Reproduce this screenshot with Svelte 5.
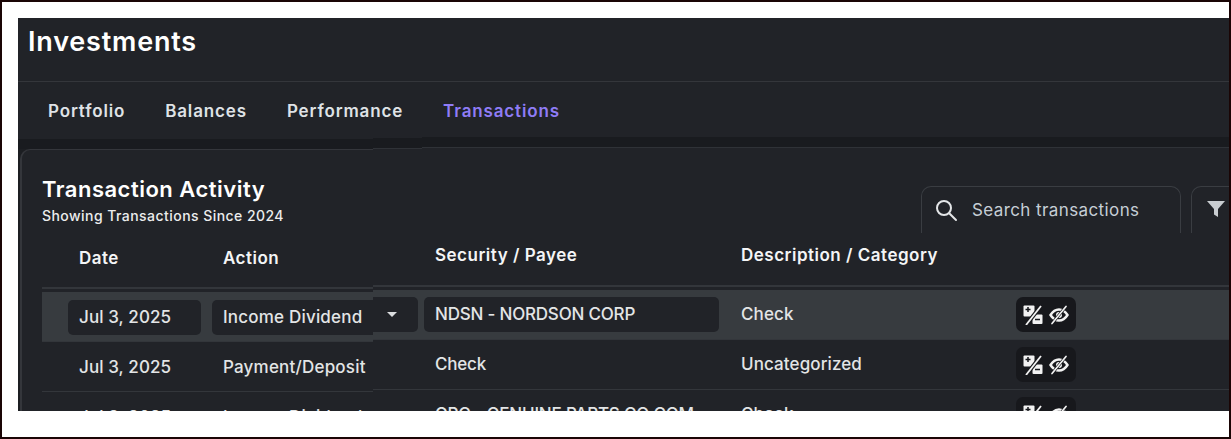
<script>
    const tabs = ["Portfolio", "Balances", "Performance", "Transactions"];
    const rows = [
        { date: "Jul 3, 2025", action: "Income Dividend", payee: "NDSN - NORDSON CORP", category: "Check", editing: true },
        { date: "Jul 3, 2025", action: "Payment/Deposit", payee: "Check", category: "Uncategorized", editing: false },
        { date: "Jul 3, 2025", action: "Income Dividend", payee: "GPC - GENUINE PARTS CO COM", category: "Check", editing: false },
    ];
</script>

<div class="frame">
    <div class="panel">
        <header class="top">
            <h1>Investments</h1>
        </header>
        <nav class="tabs">
            {#each tabs as tab}
                <a href="#{tab}" class:active={tab === "Transactions"}>{tab}</a>
            {/each}
        </nav>

        <div class="seam">
            <span class="seg one"></span>
            <span class="seg two"></span>
            <span class="seg three"></span>
        </div>

        <section class="card">
            <div class="cap">
                <div class="corner"></div>
                <div class="rest"></div>
            </div>
            <div class="card-body">
                <div class="card-head">
                    <div class="titles">
                        <h2>Transaction Activity</h2>
                        <p>Showing Transactions Since 2024</p>
                    </div>
                    <div class="search-wrap">
                        <div class="search">
                            <svg width="24" height="24" viewBox="0 0 24 24" fill="none" stroke="#e4e6e8" stroke-width="2" stroke-linecap="round">
                                <circle cx="10" cy="10" r="7" />
                                <path d="M15.2 15.2 22 22" />
                            </svg>
                            <span>Search transactions</span>
                        </div>
                    </div>
                    <div class="search-wrap filter-wrap">
                        <div class="filter">
                            <svg width="18" height="18" viewBox="0 0 18 18" fill="#c9cdd1">
                                <path d="M0 1h18l-7 8v8l-4-2.500V9z" />
                            </svg>
                        </div>
                    </div>
                </div>

                <div class="row head">
                    <div class="left">
                        <div class="cell">Date</div>
                        <div class="cell">Action</div>
                    </div>
                    <div class="right">
                        <div class="caret-cell"></div>
                        <div class="cell payee">Security / Payee</div>
                        <div class="cell category">Description / Category</div>
                    </div>
                </div>

                {#each rows as row}
                    <div class="row" class:editing={row.editing}>
                        <div class="left">
                            <div class="cell box">{row.date}</div>
                            <div class="cell box action">{row.action}</div>
                        </div>
                        <div class="right">
                            <div class="caret-cell box">
                                {#if row.editing}<span class="caret"></span>{/if}
                            </div>
                            <div class="cell box payee">{row.payee}</div>
                            <div class="cell category">{row.category}</div>
                            <div class="icons">
                                <svg width="20" height="20" viewBox="0 0 20 20">
                                    <rect x="0.500" y="0.500" width="11" height="11" rx="1" fill="#f2f2f2" />
                                    <rect x="9.500" y="9.500" width="10" height="9.500" rx="1" fill="#f2f2f2" />
                                    <path d="M2.500 4.500h5M5 2v5M12 14.500h5" stroke="#17181c" stroke-width="1.500" />
                                    <path d="M18 1 3 20" stroke="#17181c" stroke-width="4" />
                                    <path d="M18 1 3 20" stroke="#f2f2f2" stroke-width="1.800" />
                                </svg>
                                <svg width="20" height="20" viewBox="0 0 20 20" fill="none" stroke="#f2f2f2" stroke-width="2.400" stroke-linecap="round">
                                    <path d="M1.500 10C4 6 7 4.500 10 4.500s6 1.500 8.500 5.500c-2.500 4-5.500 5.500-8.500 5.500s-6-1.500-8.500-5.500z" />
                                    <circle cx="10" cy="10" r="3" fill="#f2f2f2" stroke="none" />
                                    <path d="M17 1.500 3 18.500" stroke="#17181c" stroke-width="2.800" />
                                    <path d="M17 1.500 3 18.500" stroke-width="1.700" />
                                </svg>
                            </div>
                        </div>
                    </div>
                {/each}
            </div>
        </section>
    </div>
</div>

<style>
    :global(body) {
        margin: 0;
        background: #fff;
    }
    .frame {
        box-sizing: border-box;
        width: 1231px;
        height: 439px;
        padding: 16px 0 24px 16px;
        border: 2px solid #1a0505;
        background: #fff;
        font-family: Inter, "Noto Sans", sans-serif;
        overflow: hidden;
    }
    .panel {
        height: 393px;
        overflow: hidden;
        background: #1c1e22;
        color: #e8e9ea;
    }
    .top {
        height: 64px;
        background: #212328;
        border-bottom: 1px solid #34363b;
        box-sizing: border-box;
    }
    h1 {
        margin: 0;
        padding: 8px 0 0 10px;
        font-size: 27px;
        line-height: 32px;
        font-weight: 600;
        letter-spacing: 0.8px;
        color: #fff;
    }
    .tabs {
        display: flex;
        gap: 40px;
        height: 55px;
        padding: 3px 0 0 30px;
        box-sizing: border-box;
        align-items: center;
        background: #212328;
    }
    .tabs a {
        font-size: 17px;
        font-weight: 600;
        letter-spacing: 0.85px;
        color: #dfe2e6;
        text-decoration: none;
    }
    .tabs a.active {
        color: #8f7cf6;
    }
    .seam {
        display: flex;
        height: 12px;
        background: #212328;
    }
    .seg {
        display: block;
        background: #191b1f;
        box-sizing: border-box;
        height: 11px;
        border-bottom: 1px solid #2f3237;
    }
    .seg.one {
        width: 355px;
        margin-top: 2px;
        height: 10px;
        border-bottom: none;
    }
    .seg.two {
        width: 49px;
        margin-top: 1px;
    }
    .seg.three {
        flex: 1;
        margin-top: 0;
    }
    .card {
        margin-left: 2px;
    }
    .cap {
        display: flex;
        height: 10px;
    }
    .corner {
        box-sizing: border-box;
        width: 353px;
        background: #212328;
        border-top: 1px solid #34363b;
        border-left: 2px solid #34363b;
        border-top-left-radius: 12px;
    }
    .rest {
        flex: 1;
        background: #212328;
    }
    .card-body {
        border-left: 2px solid #34363b;
        background: #212328;
        height: 300px;
    }
    .card-head {
        display: flex;
        height: 74px;
        padding-left: 20px;
    }
    .titles {
        flex: 1;
    }
    h2 {
        margin: 0;
        padding-top: 18px;
        font-size: 22px;
        line-height: 25px;
        font-weight: 600;
        letter-spacing: 0.5px;
        color: #fff;
    }
    .titles p {
        margin: 6px 0 0;
        font-size: 14px;
        line-height: 16px;
        font-weight: 500;
        letter-spacing: 0.45px;
        color: #eceded;
    }
    .search-wrap {
        width: 260px;
        height: 47px;
        margin-top: 27px;
        overflow: hidden;
        flex-shrink: 0;
    }
    .search {
        box-sizing: border-box;
        display: flex;
        align-items: center;
        height: 47px;
        padding: 0 0 0 12px;
        gap: 14px;
        border: 1px solid #3a3d42;
        border-bottom: none;
        border-radius: 10px 10px 0 0;
        font-size: 17px;
        letter-spacing: 0.4px;
        color: #c6ced6;
    }
    .filter-wrap {
        width: 38px;
        margin-left: 10px;
    }
    .filter {
        box-sizing: border-box;
        height: 47px;
        display: flex;
        align-items: center;
        padding-left: 15px;
        padding-bottom: 2px;
        border: 1px solid #3a3d42;
        border-bottom: none;
        border-right: none;
        border-radius: 10px 0 0 0;
    }
    .row {
        display: flex;
        font-size: 17px;
        font-weight: 500;
        letter-spacing: 0.1px;
        color: #e3e5e6;
        margin-left: 20px;
    }
    .left {
        box-sizing: border-box;
        display: flex;
        gap: 11px;
        width: 331px;
        padding: 8px 0 6px 26px;
        margin: 2px 0 -2px;
        border-bottom: 1px solid #33363b;
    }
    .right {
        box-sizing: border-box;
        display: flex;
        flex: 1;
        padding: 7px 0;
        border-bottom: 1px solid #33363b;
    }
    .cell {
        box-sizing: border-box;
        width: 133px;
        height: 35px;
        line-height: 34px;
        padding-left: 11px;
        white-space: nowrap;
        overflow: hidden;
    }
    .action {
        width: 161px;
        letter-spacing: 0.2px;
    }
    .caret-cell {
        box-sizing: border-box;
        width: 45px;
        height: 35px;
        margin-right: 6px;
        flex-shrink: 0;
        display: flex;
        align-items: center;
        padding-left: 14px;
    }
    .payee {
        width: 295px;
        flex-shrink: 0;
        letter-spacing: -0.2px;
    }
    .category {
        width: 275px;
        flex-shrink: 0;
        margin-left: 22px;
        padding-left: 0;
    }
    .caret {
        width: 0;
        height: 0;
        border-left: 5px solid transparent;
        border-right: 5px solid transparent;
        border-top: 5px solid #dadcde;
    }
    .icons {
        box-sizing: border-box;
        display: flex;
        align-items: center;
        gap: 6px;
        width: 60px;
        height: 35px;
        padding-left: 7px;
        background: #17181c;
        border-radius: 7px;
    }
    .row.head {
        font-weight: 600;
        letter-spacing: 0.5px;
        color: #f4f5f6;
        height: 57px;
    }
    .row.head .payee {
        letter-spacing: 0.5px;
    }
    .row.head .left,
    .row.head .right {
        padding-top: 6px;
        padding-bottom: 0;
        border-bottom-width: 2px;
        height: 54px;
    }
    .row.head .right {
        padding-top: 5px;
    }
    .row.editing .left,
    .row.editing .right {
        background: #373b3f;
    }
    .row.editing .box {
        background: #212328;
    }
    .row.editing .action {
        border-radius: 5px 0 0 5px;
    }
    .row.editing .caret-cell {
        border-radius: 0 5px 5px 0;
    }
    .row.editing .left .box:first-child,
    .row.editing .payee {
        border-radius: 5px;
    }
</style>
